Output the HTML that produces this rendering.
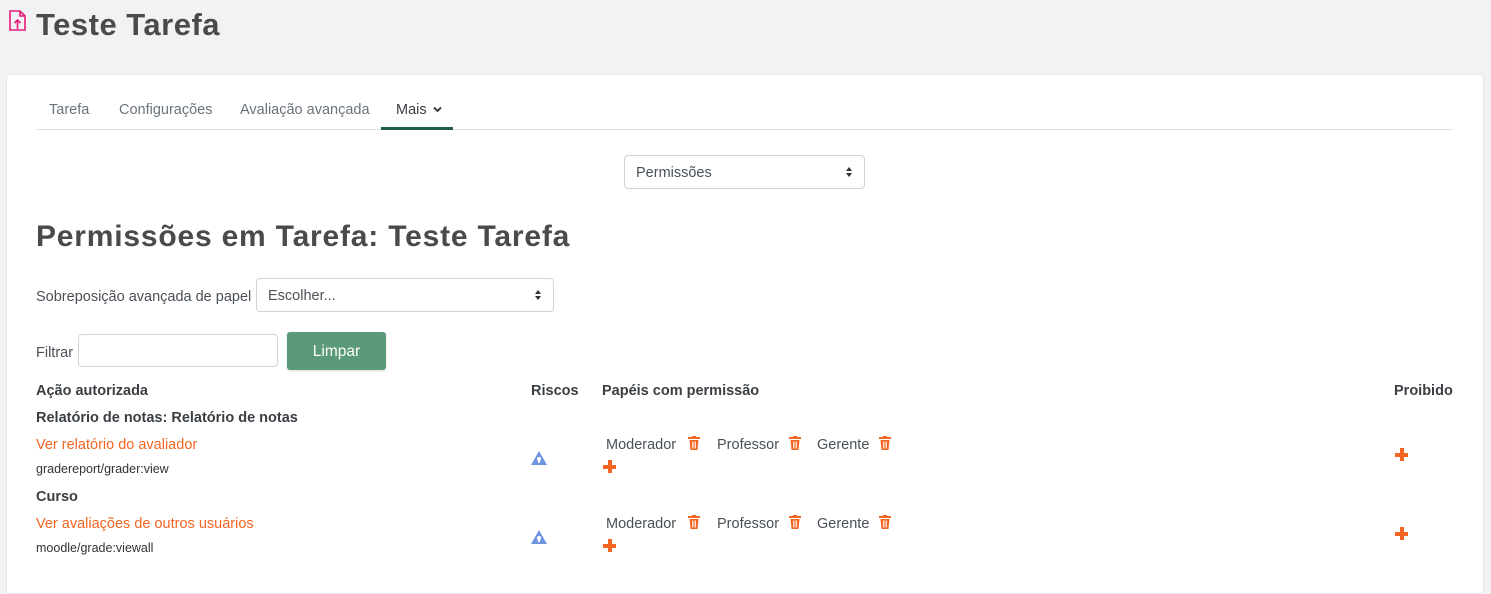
<!DOCTYPE html>
<html><head><meta charset="utf-8"><style>
*{box-sizing:border-box;margin:0;padding:0}
body{width:1491px;height:567px;background:#f1f2f4;font-family:"Liberation Sans",sans-serif;color:#495057;position:relative;overflow:hidden;font-size:14.5px}
.a{position:absolute;white-space:nowrap}
.card{position:absolute;left:6px;top:74px;width:1478px;height:520px;background:#fff;border:1px solid #e4e6e9;border-radius:4px}
.sel{position:absolute;border:1px solid #ced4da;border-radius:4px;background:#fff;padding-left:11px;padding-top:2px;display:flex;align-items:center;color:#495057}
.sel:after{content:"";position:absolute;right:12px;top:50%;margin-top:-5px;border-left:3.5px solid transparent;border-right:3.5px solid transparent;border-bottom:4px solid #333;}
.sel:before{content:"";position:absolute;right:12px;top:50%;margin-top:1px;border-left:3.5px solid transparent;border-right:3.5px solid transparent;border-top:4px solid #333;}
b{font-weight:bold;color:#3a3f44}
.lk{color:#f26522}
.sm{font-size:12.5px;color:#333}
</style></head><body>
<svg class="a" style="left:9px;top:10px" width="18" height="22" viewBox="0 0 18 22" fill="none" stroke="#e6197a" stroke-width="1.6"><path d="M1 1h10l5 5v14H1z M11 1v5h5"/><path d="M8.5 19V10 M5.5 13l3-3 3 3"/></svg>
<div class="a" style="left:36px;top:7px;font-size:31px;font-weight:bold;color:#4a4a4a;letter-spacing:0.5px">Teste Tarefa</div>
<div class="card"></div>
<div class="a" style="left:49px;top:102px;color:#6a737b">Tarefa</div>
<div class="a" style="left:119px;top:102px;color:#6a737b">Configurações</div>
<div class="a" style="left:240px;top:102px;color:#6a737b">Avaliação avançada</div>
<div class="a" style="left:396px;top:102px;color:#3a3f44">Mais <svg width="9" height="7" viewBox="0 0 9 7" style="margin-left:2px;vertical-align:1px"><path d="M1 1.5l3.5 3.5 3.5-3.5" fill="none" stroke="#3a3f44" stroke-width="2"/></svg></div>
<div class="a" style="left:36px;top:129px;width:1417px;height:1px;background:#dee2e6"></div>
<div class="a" style="left:381px;top:127px;width:72px;height:3px;background:#1f5f4a"></div>
<div class="sel" style="left:624px;top:155px;width:241px;height:34px">Permissões</div>
<div class="a" style="left:36px;top:220px;font-size:30px;font-weight:bold;color:#4a4a4a;letter-spacing:0.8px">Permissões em Tarefa: Teste Tarefa</div>
<div class="a" style="left:36px;top:289px">Sobreposição avançada de papel</div>
<div class="sel" style="left:256px;top:278px;width:298px;height:34px">Escolher...</div>
<div class="a" style="left:36px;top:345px">Filtrar</div>
<div class="a" style="left:78px;top:334px;width:200px;height:33px;border:1px solid #ced4da;border-radius:4px"></div>
<div class="a" style="left:287px;top:332px;width:99px;height:38px;background:#5a9a7a;border-radius:3px;color:#fff;font-size:15.5px;text-align:center;line-height:40px;box-shadow:0 1px 2px rgba(0,0,0,.15)">Limpar</div>
<div class="a" style="left:36px;top:383px"><b>Ação autorizada</b></div>
<div class="a" style="left:531px;top:383px"><b>Riscos</b></div>
<div class="a" style="left:602px;top:383px"><b>Papéis com permissão</b></div>
<div class="a" style="left:1394px;top:383px"><b>Proibido</b></div>
<div class="a" style="left:36px;top:410px"><b>Relatório de notas: Relatório de notas</b></div>
<div class="a lk" style="left:36px;top:437px">Ver relatório do avaliador</div>
<div class="a sm" style="left:36px;top:462px">gradereport/grader:view</div>
<div class="a" style="left:36px;top:489px"><b>Curso</b></div>
<div class="a lk" style="left:36px;top:516px">Ver avaliações de outros usuários</div>
<div class="a sm" style="left:36px;top:541px">moodle/grade:viewall</div>
<script>
function row(y){
 var h='';
 h+='<svg class="a" style="left:530px;top:'+(y+1)+'px" width="18" height="16" viewBox="0 0 18 16"><path d="M9 1L17 15H1z" fill="#6f94e0"/><circle cx="9" cy="9" r="2" fill="#fff"/><rect x="8" y="9" width="2" height="4" fill="#fff"/></svg>';
 var roles=[['Moderador',606,688],['Professor',717,789],['Gerente',817,879]];
 roles.forEach(function(r){
  h+='<div class="a" style="left:'+r[1]+'px;top:'+(y-12)+'px">'+r[0]+'</div>';
  h+='<svg class="a" style="left:'+r[2]+'px;top:'+(y-13)+'px" width="12" height="14" viewBox="0 0 12 14"><rect x="0" y="1" width="12" height="2" fill="#f26522"/><rect x="4" y="0" width="4" height="2" fill="#f26522"/><path d="M1.5 4h9l-1 10h-7z" fill="#f26522"/><path d="M4.5 5.5v7M6 5.5v7M7.5 5.5v7" stroke="#fff" stroke-width=".8"/></svg>';
 });
 h+='<div class="a" style="left:603px;top:'+(y+11)+'px;width:13px;height:13px"><div style="position:absolute;left:5px;top:0;width:3.5px;height:13px;background:#f26522"></div><div style="position:absolute;left:0;top:5px;width:13px;height:3.5px;background:#f26522"></div></div>';
 h+='<div class="a" style="left:1395px;top:'+(y-1)+'px;width:13px;height:13px"><div style="position:absolute;left:5px;top:0;width:3.5px;height:13px;background:#f26522"></div><div style="position:absolute;left:0;top:5px;width:13px;height:3.5px;background:#f26522"></div></div>';
 document.write(h);
}
row(449);row(528);
</script>
</body></html>
